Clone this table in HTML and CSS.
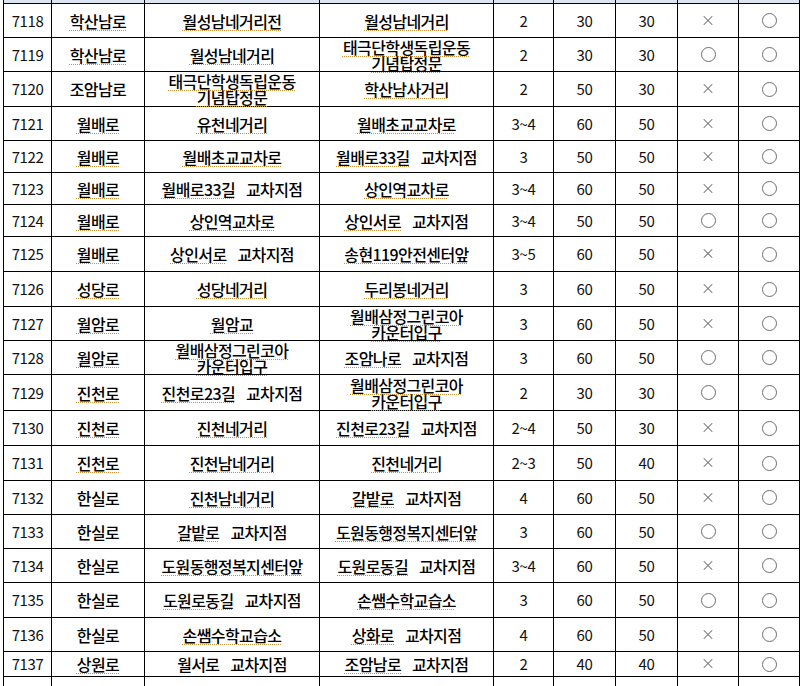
FILE: index.html
```html
<!DOCTYPE html>
<html lang="ko">
<head>
<meta charset="utf-8">
<title>도로 구간</title>
<link rel="stylesheet" href="styles.css">
</head>
<body>
<div class="sheet">
  <div class="row head"><div></div><div></div><div></div><div></div><div></div><div></div><div></div><div></div><div></div></div>

  <div class="row h34"><div class="num">7118</div><div><span class="sp">학산남로</span></div><div><span class="sp">월성남네거리전</span></div><div><span class="sp">월성남네거리</span></div><div class="num">2</div><div class="num">30</div><div class="num">30</div><div><span class="x"></span></div><div><span class="o"></span></div></div>

  <div class="row h34"><div class="num">7119</div><div><span class="sp">학산남로</span></div><div><span class="sp">월성남네거리</span></div><div class="two"><span class="sp">태극단학생독립운동</span><span class="sp">기념탑정문</span></div><div class="num">2</div><div class="num">30</div><div class="num">30</div><div><span class="o"></span></div><div><span class="o"></span></div></div>

  <div class="row h35"><div class="num">7120</div><div><span class="t">조암남로</span></div><div class="two"><span class="sp">태극단학생독립운동</span><span class="sp">기념탑정문</span></div><div><span class="sp">학산남사거리</span></div><div class="num">2</div><div class="num">50</div><div class="num">30</div><div><span class="x"></span></div><div><span class="o"></span></div></div>

  <div class="row h34"><div class="num">7121</div><div><span class="sp">월배로</span></div><div><span class="sp">유천네거리</span></div><div><span class="sp">월배초교교차로</span></div><div class="num">3~4</div><div class="num">60</div><div class="num">50</div><div><span class="x"></span></div><div><span class="o"></span></div></div>

  <div class="row h32"><div class="num">7122</div><div><span class="sp">월배로</span></div><div><span class="sp">월배초교교차로</span></div><div><span class="t"><span class="sp">월배로33길</span> 교차지점</span></div><div class="num">3</div><div class="num">50</div><div class="num">50</div><div><span class="x"></span></div><div><span class="o"></span></div></div>

  <div class="row h32"><div class="num">7123</div><div><span class="sp">월배로</span></div><div><span class="t"><span class="sp">월배로33길</span> 교차지점</span></div><div><span class="sp">상인역교차로</span></div><div class="num">3~4</div><div class="num">60</div><div class="num">50</div><div><span class="x"></span></div><div><span class="o"></span></div></div>

  <div class="row h32"><div class="num">7124</div><div><span class="sp">월배로</span></div><div><span class="sp">상인역교차로</span></div><div><span class="t"><span class="sp">상인서로</span> 교차지점</span></div><div class="num">3~4</div><div class="num">50</div><div class="num">50</div><div><span class="o"></span></div><div><span class="o"></span></div></div>

  <div class="row h35"><div class="num">7125</div><div><span class="sp">월배로</span></div><div><span class="t"><span class="sp">상인서로</span> 교차지점</span></div><div><span class="sp">송현119안전센터앞</span></div><div class="num">3~5</div><div class="num">60</div><div class="num">50</div><div><span class="x"></span></div><div><span class="o"></span></div></div>

  <div class="row h35"><div class="num">7126</div><div><span class="sp">성당로</span></div><div><span class="sp">성당네거리</span></div><div><span class="sp">두리봉네거리</span></div><div class="num">3</div><div class="num">60</div><div class="num">50</div><div><span class="x"></span></div><div><span class="o"></span></div></div>

  <div class="row h34"><div class="num">7127</div><div><span class="sp">월암로</span></div><div><span class="sp">월암교</span></div><div class="two"><span class="sp">월배삼정그린코아</span><span class="sp">카운터입구</span></div><div class="num">3</div><div class="num">60</div><div class="num">50</div><div><span class="x"></span></div><div><span class="o"></span></div></div>

  <div class="row h34"><div class="num">7128</div><div><span class="sp">월암로</span></div><div class="two"><span class="sp">월배삼정그린코아</span><span class="sp">카운터입구</span></div><div><span class="t"><span class="sp">조암나로</span> 교차지점</span></div><div class="num">3</div><div class="num">60</div><div class="num">50</div><div><span class="o"></span></div><div><span class="o"></span></div></div>

  <div class="row h36"><div class="num">7129</div><div><span class="sp">진천로</span></div><div><span class="t"><span class="sp">진천로23길</span> 교차지점</span></div><div class="two"><span class="sp">월배삼정그린코아</span><span class="sp">카운터입구</span></div><div class="num">2</div><div class="num">30</div><div class="num">30</div><div><span class="o"></span></div><div><span class="o"></span></div></div>

  <div class="row h35"><div class="num">7130</div><div><span class="sp">진천로</span></div><div><span class="sp">진천네거리</span></div><div><span class="t"><span class="sp">진천로23길</span> 교차지점</span></div><div class="num">2~4</div><div class="num">50</div><div class="num">30</div><div><span class="x"></span></div><div><span class="o"></span></div></div>

  <div class="row h35"><div class="num">7131</div><div><span class="sp">진천로</span></div><div><span class="sp">진천남네거리</span></div><div><span class="sp">진천네거리</span></div><div class="num">2~3</div><div class="num">50</div><div class="num">40</div><div><span class="x"></span></div><div><span class="o"></span></div></div>

  <div class="row h34"><div class="num">7132</div><div><span class="t">한실로</span></div><div><span class="sp">진천남네거리</span></div><div><span class="t"><span class="sp">갈밭로</span> 교차지점</span></div><div class="num">4</div><div class="num">60</div><div class="num">50</div><div><span class="x"></span></div><div><span class="o"></span></div></div>

  <div class="row h34"><div class="num">7133</div><div><span class="t">한실로</span></div><div><span class="t"><span class="sp">갈밭로</span> 교차지점</span></div><div><span class="sp">도원동행정복지센터앞</span></div><div class="num">3</div><div class="num">60</div><div class="num">50</div><div><span class="o"></span></div><div><span class="o"></span></div></div>

  <div class="row h34"><div class="num">7134</div><div><span class="t">한실로</span></div><div><span class="sp">도원동행정복지센터앞</span></div><div><span class="t"><span class="sp">도원로동길</span> 교차지점</span></div><div class="num">3~4</div><div class="num">60</div><div class="num">50</div><div><span class="x"></span></div><div><span class="o"></span></div></div>

  <div class="row h35"><div class="num">7135</div><div><span class="t">한실로</span></div><div><span class="t"><span class="sp">도원로동길</span> 교차지점</span></div><div><span class="sp">손쌤수학교습소</span></div><div class="num">3</div><div class="num">60</div><div class="num">50</div><div><span class="o"></span></div><div><span class="o"></span></div></div>

  <div class="row h34"><div class="num">7136</div><div><span class="t">한실로</span></div><div><span class="sp">손쌤수학교습소</span></div><div><span class="t"><span class="sp">상화로</span> 교차지점</span></div><div class="num">4</div><div class="num">60</div><div class="num">50</div><div><span class="x"></span></div><div><span class="o"></span></div></div>

  <div class="row h25"><div class="num">7137</div><div><span class="sp">상원로</span></div><div><span class="t">월서로 교차지점</span></div><div><span class="t"><span class="sp">조암남로</span> 교차지점</span></div><div class="num">2</div><div class="num">40</div><div class="num">40</div><div><span class="x"></span></div><div><span class="o"></span></div></div>

  <div class="row h34"><div></div><div></div><div></div><div></div><div></div><div></div><div></div><div></div><div></div></div>
</div>
</body>
</html>
```

FILE: styles.css
```css
html, body {
  margin: 0;
  padding: 0;
  background: #ffffff;
}

body {
  font-family: "Noto Sans CJK KR", "Noto Sans", sans-serif;
  font-size: 16px;
  font-weight: 500;
  color: #000000;
  overflow: hidden;
}

.sheet {
  margin-left: 3px;
  border-left: 1px solid #000;
  width: max-content;
}

.row {
  display: grid;
  grid-template-columns: 48px 93px 175px 174px 60px 62px 62px 61px 61px;
}

.row > div {
  box-sizing: border-box;
  border-right: 1px solid #000;
  border-bottom: 1px solid #000;
  display: flex;
  align-items: center;
  justify-content: center;
  text-align: center;
  white-space: nowrap;
  letter-spacing: -0.6px;
  word-spacing: 7px;
  line-height: 18px;
}

.row.head > div {
  background: #dce5f1;
}

.head { height: 4px; }
.h25 { height: 25px; }
.h32 { height: 32px; }
.h34 { height: 34px; }
.h35 { height: 35px; }
.h36 { height: 36px; }

.row > div.two {
  flex-direction: column;
  line-height: 16px;
}

.row > div.num {
  font-size: 15px;
  font-weight: 400;
  letter-spacing: -0.4px;
  color: #111;
}

.sp {
  text-decoration-line: underline;
  text-decoration-style: dotted;
  text-decoration-color: #c8923a;
  text-decoration-thickness: 1px;
  text-underline-offset: 2px;
}

.o {
  display: block;
  width: 13px;
  height: 13px;
  border: 1px solid #6e6e6e;
  border-radius: 50%;
}

.x {
  display: block;
  position: relative;
  width: 10px;
  height: 10px;
}

.x::before,
.x::after {
  content: "";
  position: absolute;
  left: -1px;
  top: 4px;
  width: 12px;
  height: 1px;
  background: #6e6e6e;
}

.x::before { transform: rotate(45deg); }
.x::after { transform: rotate(-45deg); }
```
